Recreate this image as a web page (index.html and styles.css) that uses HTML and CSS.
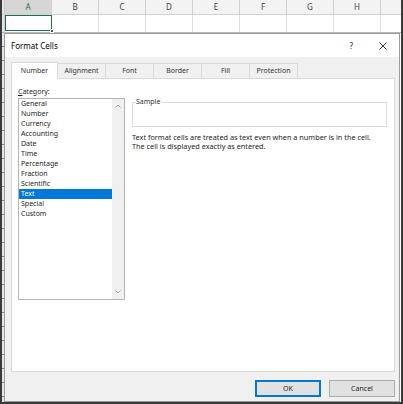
FILE: index.html
```html
<!DOCTYPE html>
<html>
<head>
<meta charset="utf-8">
<link rel="stylesheet" href="styles.css">
</head>
<body>
<div class="screen">
  <div class="colhead">
    <div class="corner"></div>
    <div class="ch sel">A</div>
    <div class="ch">B</div>
    <div class="ch">C</div>
    <div class="ch">D</div>
    <div class="ch">E</div>
    <div class="ch">F</div>
    <div class="ch">G</div>
    <div class="ch">H</div>
    <div class="ch last"></div>
  </div>
  <div class="row1">
    <div class="corner"></div>
    <div class="cell active"><span class="handle"></span></div>
    <div class="cell"></div>
    <div class="cell"></div>
    <div class="cell"></div>
    <div class="cell"></div>
    <div class="cell"></div>
    <div class="cell"></div>
    <div class="cell"></div>
    <div class="cell last"></div>
  </div>
  <div class="lower">
    <div class="rowhdr"></div>
    <div class="dialog">
      <div class="titlebar">
        <span class="title">Format Cells</span>
        <span class="help">?</span>
        <svg class="close" width="8" height="8" viewBox="0 0 8 8"><path d="M0.5 0.5 L7.5 7.5 M7.5 0.5 L0.5 7.5" stroke="#222" stroke-width="0.9" fill="none"/></svg>
      </div>
      <div class="dbody">
        <div class="tabs">
          <div class="tab active">Number</div>
          <div class="tab">Alignment</div>
          <div class="tab">Font</div>
          <div class="tab">Border</div>
          <div class="tab">Fill</div>
          <div class="tab">Protection</div>
        </div>
        <div class="panel">
          <div class="leftcol">
            <div class="label"><u>C</u>ategory:</div>
            <div class="listbox">
              <ul class="items">
                <li>General</li>
                <li>Number</li>
                <li>Currency</li>
                <li>Accounting</li>
                <li>Date</li>
                <li>Time</li>
                <li>Percentage</li>
                <li>Fraction</li>
                <li>Scientific</li>
                <li class="selected">Text</li>
                <li>Special</li>
                <li>Custom</li>
              </ul>
              <div class="scrollbar">
                <svg width="6" height="4" viewBox="0 0 6 4"><path d="M0.5 3.5 L3 1 L5.5 3.5" stroke="#a8a8a8" stroke-width="1" fill="none"/></svg>
                <svg width="6" height="4" viewBox="0 0 6 4"><path d="M0.5 0.5 L3 3 L5.5 0.5" stroke="#a8a8a8" stroke-width="1" fill="none"/></svg>
              </div>
            </div>
          </div>
          <div class="rightcol">
            <fieldset class="sample">
              <legend>Sample</legend>
            </fieldset>
            <p class="desc">Text format cells are treated as text even when a number is in the cell.</p>
            <p class="desc">The cell is displayed exactly as entered.</p>
          </div>
        </div>
        <div class="footer">
          <button class="btn ok">OK</button>
          <button class="btn">Cancel</button>
        </div>
      </div>
    </div>
  </div>
</div>
</body>
</html>
```
FILE: styles.css
```css
* { box-sizing: border-box; }
html, body { margin: 0; padding: 0; background: #fff; }
body { font-family: "Noto Sans", "Open Sans", sans-serif; color: #1e1e1e; }

.screen {
  width: 403px;
  height: 404px;
  border-left: 2px solid #3a3a3a;
  border-right: 2px solid #3a3a3a;
  border-bottom: 2px solid #3a3a3a;
  display: flex;
  flex-direction: column;
  overflow: hidden;
}

.colhead {
  display: flex;
  height: 15px;
  flex: none;
  background: #f3f3f3;
  border-bottom: 1px solid #d0d0d0;
}
.corner { width: 3px; flex: none; background: #e6e6e6; border-right: 1px solid #c8c8c8; }
.ch {
  width: 47px;
  flex: none;
  border-right: 1px solid #d0d0d0;
  font-size: 8px;
  line-height: 14px;
  text-align: center;
  color: #444;
}
.ch.sel { background: #d6d6d6; color: #217346; }
.ch.last, .cell.last { flex: 1; border-right: none; }

.row1 {
  display: flex;
  height: 18px;
  flex: none;
  background: #fff;
  border-bottom: 1px solid #b8b8b8;
}
.row1 .corner { background: #e6e6e6; }
.cell { width: 47px; flex: none; border-right: 1px solid #e0e0e0; position: relative; }
.cell.active { border: 1.5px solid #217346; height: 16px; }
.handle {
  position: absolute;
  right: -3px;
  bottom: -3px;
  width: 4px;
  height: 4px;
  background: #217346;
  border: 1px solid #fff;
}

.lower { flex: 1; display: flex; min-height: 0; }
.rowhdr {
  width: 2px;
  flex: none;
  background: repeating-linear-gradient(to bottom, #e6e6e6 0, #e6e6e6 13px, #8a8a8a 13px, #8a8a8a 14px);
}
.dialog {
  flex: 1;
  margin-right: 1px;
  border: 1px solid #9c9c9c;
  display: flex;
  flex-direction: column;
  background: #f0f0f0;
}

.titlebar {
  height: 23px;
  flex: none;
  background: #fff;
  display: flex;
  align-items: center;
  padding-left: 6px;
  padding-right: 12px;
}
.title { font-size: 8px; color: #000; flex: 1; }
.help { font-size: 8px; color: #222; margin-right: 26px; }
.close { display: block; }

.dbody {
  flex: 1;
  display: flex;
  flex-direction: column;
  padding: 5px 4px 4px 6px;
}
.tabs { display: flex; height: 16px; flex: none; align-items: flex-end; }
.tab {
  width: 49px;
  height: 15px;
  border: 1px solid #dadada;
  border-bottom: none;
  margin-left: -1px;
  font-size: 7px;
  line-height: 14px;
  text-align: center;
  color: #333;
  background: #f0f0f0;
}
.tab:first-child { margin-left: 0; }
.tab.active {
  width: 47px;
  height: 17px;
  background: #fff;
  position: relative;
  z-index: 1;
  margin-bottom: -1px;
  line-height: 16px;
}

.panel {
  height: 294px;
  flex: none;
  background: #fff;
  border: 1px solid #dadada;
  display: flex;
  padding: 7px 6px 0 6px;
  gap: 7px;
}
.leftcol { width: 107px; flex: none; }
.label { font-size: 7px; line-height: 11px; color: #1e1e1e; margin-bottom: 1px; }
.listbox {
  height: 202px;
  border: 1px solid #b4b4b4;
  display: flex;
}
.items { list-style: none; margin: 0; padding: 0; flex: 1; }
.items li {
  height: 10px;
  font-size: 7px;
  line-height: 10px;
  padding-left: 2px;
  color: #1e1e1e;
}
.items li.selected { background: #0078d7; color: #fff; }
.scrollbar {
  width: 12px;
  flex: none;
  background: #f0f0f0;
  display: flex;
  flex-direction: column;
  justify-content: space-between;
  align-items: center;
  padding: 5px 0 5px;
}
.scrollbar svg { display: block; }

.rightcol { flex: 1; padding-top: 12px; padding-right: 1px; }
.sample {
  margin: 0 0 6px 0;
  padding: 0;
  height: 29px;
  border: 1px solid #dcdcdc;
  min-width: 0;
}
.sample legend {
  font-size: 7px;
  line-height: 8px;
  padding: 0 1px 0 0;
  margin-left: 3px;
  color: #333;
}
.desc {
  margin: 0;
  font-size: 7.3px;
  line-height: 9px;
  white-space: nowrap;
  color: #1e1e1e;
}

.footer {
  display: flex;
  justify-content: flex-end;
  gap: 8px;
  margin-top: 8px;
}
.btn {
  width: 66px;
  height: 17px;
  padding: 0;
  background: #e1e1e1;
  border: 1px solid #adadad;
  font-family: inherit;
  font-size: 7px;
  color: #1e1e1e;
}
.btn.ok { border: 1px solid #0078d7; box-shadow: inset 0 0 0 1px #0078d7; }
```
